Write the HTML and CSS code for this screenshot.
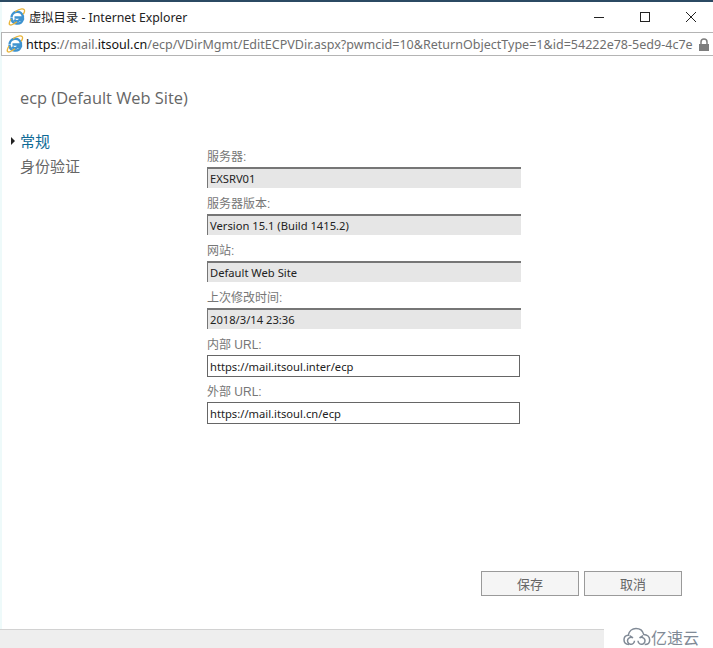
FILE: index.html
```html
<!DOCTYPE html>
<html>
<head>
    <title>虚拟目录 - Internet Explorer</title>
    <link rel="stylesheet" href="styles.css">
</head>
<body>
    <div class="window">
        <div class="titlebar">
            <svg class="ie-icon" viewBox="0 0 18 18" width="18" height="18">
                <path d="M3.500 9.500a5.800 5.800 0 0 1 11.400-1.500v1.500H6.500M6.300 11.500a3 3 0 0 0 5.200.4h3.200a5.800 5.800 0 0 1-11.200-2" fill="none" stroke="#3f93cf" stroke-width="2.400"/>
                <path d="M3 11C0 16 1 18 4.500 16.500c1.500-.6 3-1.600 4.500-2.700M7 3.800C11.500 .5 17.500-.5 16.500 3.500c-.2.9-.7 1.800-1.400 2.800" fill="none" stroke="#e8b53c" stroke-width="1.300"/>
            </svg>
            <span class="title">虚拟目录 - Internet Explorer</span>
            <div class="window-buttons">
                <svg viewBox="0 0 12 12" width="12" height="12"><path d="M1 6.500h10" stroke="#222" stroke-width="1"/></svg>
                <svg viewBox="0 0 12 12" width="12" height="12"><rect x="1.500" y="1.500" width="9" height="9" fill="none" stroke="#222"/></svg>
                <svg viewBox="0 0 12 12" width="12" height="12"><path d="M1 1l10 10M11 1L1 11" stroke="#222" stroke-width="1"/></svg>
            </div>
        </div>
        <div class="addressbar">
            <svg class="ie-icon" viewBox="0 0 18 18" width="18" height="18">
                <path d="M3.500 9.500a5.800 5.800 0 0 1 11.400-1.500v1.500H6.500M6.300 11.500a3 3 0 0 0 5.200.4h3.200a5.800 5.800 0 0 1-11.200-2" fill="none" stroke="#3f93cf" stroke-width="2.400"/>
                <path d="M3 11C0 16 1 18 4.500 16.500c1.500-.6 3-1.600 4.500-2.700M7 3.800C11.500 .5 17.500-.5 16.500 3.500c-.2.9-.7 1.800-1.400 2.800" fill="none" stroke="#e8b53c" stroke-width="1.300"/>
            </svg>
            <span class="url"><b>https</b>://mail.<b>itsoul.cn</b>/ecp/VDirMgmt/EditECPVDir.aspx?pwmcid=10&amp;ReturnObjectType=1&amp;id=54222e78-5ed9-4c7e</span>
            <svg class="lock" viewBox="0 0 12 13" width="12" height="13">
                <rect x="1" y="6" width="10" height="7" fill="#7d7d7d"/>
                <path d="M3 6V4a3 3 0 0 1 6 0v2" fill="none" stroke="#7d7d7d" stroke-width="1.500"/>
            </svg>
        </div>

        <div class="page">
            <h1>ecp (Default Web Site)</h1>
            <div class="content">
                <ul class="nav">
                    <li class="active">常规</li>
                    <li>身份验证</li>
                </ul>
                <form class="fields">
                    <label>服务器:</label>
                    <div class="readonly">EXSRV01</div>
                    <label>服务器版本:</label>
                    <div class="readonly">Version 15.1 (Build 1415.2)</div>
                    <label>网站:</label>
                    <div class="readonly">Default Web Site</div>
                    <label>上次修改时间:</label>
                    <div class="readonly">2018/3/14 23:36</div>
                    <label for="internal-url">内部 URL:</label>
                    <input type="text" id="internal-url" value="https://mail.itsoul.inter/ecp">
                    <label for="external-url">外部 URL:</label>
                    <input type="text" id="external-url" value="https://mail.itsoul.cn/ecp">
                </form>
            </div>
            <div class="actions">
                <button type="button">保存</button>
                <button type="button">取消</button>
            </div>
        </div>

        <div class="bottom">
            <div class="statusbar"></div>
            <div class="watermark">
                <svg viewBox="0 0 28 20" width="28" height="20">
                    <path d="M6 17.500C2.500 17.500 1 15.200 1 12.800 1 10.200 3 8.400 5.300 8.200 6 4 9.300 1.500 13 1.500c3.800 0 6.800 2.400 7.700 5.900 3.500.2 6 2.500 6 5.500 0 2.700-2 4.600-5 4.600" fill="none" stroke="#808a96" stroke-width="1.500"/>
                    <path d="M11.500 13.800a3.500 3.500 0 1 1-1.500-2.900L6.500 8.500" fill="none" stroke="#808a96" stroke-width="1.500"/>
                    <path d="M15 13.800a3.500 3.500 0 1 0 1.500-2.900L20 8.500" fill="none" stroke="#808a96" stroke-width="1.500"/>
                </svg>
                <span>亿速云</span>
            </div>
        </div>
    </div>
</body>
</html>
```

FILE: styles.css
```css
body {
    margin: 0;
    background-color: #fff;
    font-family: "Liberation Sans", "Noto Sans CJK SC", sans-serif;
    overflow: hidden;
}

.window {
    width: 713px;
    height: 648px;
    display: flex;
    flex-direction: column;
    border-top: 2px solid #2b4a63;
    box-shadow: inset 2px 0 #eefafa;
    box-sizing: border-box;
}

.titlebar {
    height: 30px;
    display: flex;
    align-items: center;
    padding-left: 8px;
    flex-shrink: 0;
}

.title {
    margin-left: 3px;
    font-family: "Noto Sans", "Noto Sans CJK SC", sans-serif;
    font-size: 12.300px;
    color: #222;
}

.window-buttons {
    margin-left: auto;
    margin-right: 16px;
    display: flex;
    gap: 34px;
}

.addressbar {
    height: 22px;
    margin-left: 1px;
    display: flex;
    align-items: center;
    gap: 2px;
    padding: 0 3px 0 4px;
    border: 1px solid #b4b4b4;
    border-right: none;
    flex-shrink: 0;
    overflow: hidden;
}

.addressbar .ie-icon {
    flex-shrink: 0;
}

.url {
    flex: 1;
    min-width: 0;
    overflow: hidden;
    white-space: nowrap;
    font-family: "Noto Sans", sans-serif;
    font-size: 12.540px;
    color: #6f6f6f;
}

.url b {
    font-weight: normal;
    color: #111;
}

.lock {
    flex-shrink: 0;
    margin-left: 2px;
}

.page {
    flex: 1;
    padding: 31px 31px 0 11px;
    display: flex;
    flex-direction: column;
}

h1 {
    margin: 0 0 0 9px;
    font-family: "Open Sans", sans-serif;
    font-size: 16.400px;
    font-weight: normal;
    line-height: 22px;
    color: #666;
}

.content {
    display: flex;
    margin-top: 20px;
}

.nav {
    list-style: none;
    width: 196px;
    margin: 0;
    padding: 0 0 0 9px;
    font-size: 15px;
    line-height: 25px;
    color: #666;
    box-sizing: border-box;
}

.nav .active {
    position: relative;
    color: #0e6a96;
}

.nav .active::before {
    content: "";
    position: absolute;
    left: -9px;
    top: 8px;
    border-left: 4px solid #222;
    border-top: 4px solid transparent;
    border-bottom: 4px solid transparent;
}

.fields {
    display: flex;
    flex-direction: column;
    width: 314px;
    padding-top: 12px;
}

label {
    display: block;
    height: 26px;
    line-height: 20px;
    padding-top: 6px;
    font-size: 12px;
    color: #777;
    box-sizing: border-box;
}

.readonly {
    height: 21px;
    line-height: 19px;
    padding-left: 2px;
    border-top: 2px solid #767676;
    border-left: 1px solid #767676;
    background-color: #e6e6e6;
    color: #222;
    font-family: "Noto Sans", sans-serif;
    font-size: 11.200px;
    box-sizing: border-box;
}

input[type="text"] {
    height: 22px;
    width: 313px;
    padding: 0 2px;
    border: 1px solid #666;
    border-radius: 0;
    font-family: "Noto Sans", sans-serif;
    font-size: 11.200px;
    color: #222;
    box-sizing: border-box;
    outline: none;
}

input + label {
    height: 25px;
    padding-top: 5px;
}

.actions {
    display: flex;
    justify-content: flex-end;
    gap: 5px;
    margin-top: 147px;
}

button {
    width: 98px;
    height: 25px;
    padding: 0;
    border: 1px solid #9a9a9a;
    border-radius: 0;
    background-color: #f5f5f5;
    color: #666;
    font-family: "Liberation Sans", "Noto Sans CJK SC", sans-serif;
    font-size: 13px;
}

.bottom {
    display: flex;
    align-items: flex-end;
    height: 23px;
    flex-shrink: 0;
}

.statusbar {
    width: 604px;
    height: 19px;
    background-color: #eeeeee;
    border-top: 1px solid #d2d2d2;
    box-sizing: border-box;
}

.watermark {
    display: flex;
    align-items: center;
    margin-left: 19px;
    height: 23px;
    color: #808a96;
    font-size: 16px;
}
```
